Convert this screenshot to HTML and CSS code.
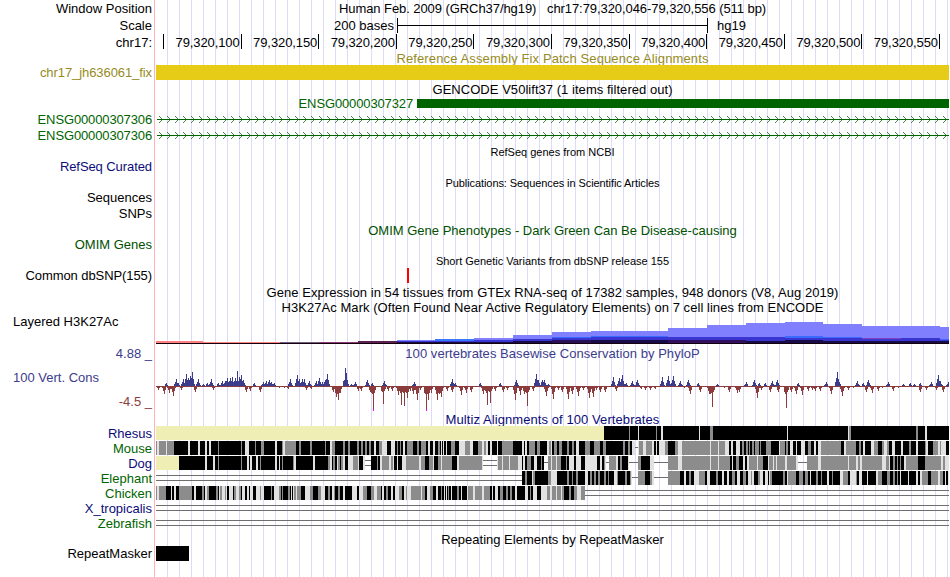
FILE: index.html
```html
<!DOCTYPE html>
<html lang="en">
<head>
  <meta charset="UTF-8">
  <title>chr17:79,320,046-79,320,556 - Genome Browser</title>
  <link rel="stylesheet" href="styles.css">
</head>
<body>
  <div class="browser">
    <div class="row h17">
      <div class="label">Window Position</div>
      <div class="title t-position">Human Feb. 2009 (GRCh37/hg19)&nbsp;&nbsp; chr17:79,320,046-79,320,556 (511 bp)</div>
    </div>
    <div class="row h17">
      <div class="label">Scale</div>
      <div class="scale">
        <span class="scale-size">200 bases</span>
        <span class="scale-bar"></span>
        <span>hg19</span>
      </div>
    </div>
    <div class="row h17">
      <div class="label">chr17:</div>
      <div class="ruler">
        <span class="first"></span>
        <span>79,320,100</span>
        <span>79,320,150</span>
        <span>79,320,200</span>
        <span>79,320,250</span>
        <span>79,320,300</span>
        <span>79,320,350</span>
        <span>79,320,400</span>
        <span>79,320,450</span>
        <span>79,320,500</span>
        <span>79,320,550</span>
      </div>
    </div>

    <div class="row h14"><div></div><div class="title gold t-fix">Reference Assembly Fix Patch Sequence Alignments</div></div>
    <div class="row h16">
      <div class="label raised gold tight">chr17_jh636061_fix</div>
      <div class="bar fix-bar"></div>
    </div>

    <div class="row h17"><div></div><div class="title t-gencode">GENCODE V50lift37 (1 items filtered out)</div></div>
    <div class="row h13">
      <div></div>
      <div class="gene">
        <span class="gene-name">ENSG00000307327</span>
        <span class="gene-exon"></span>
      </div>
    </div>
    <div class="row h16">
      <div class="label green ensg">ENSG00000307306</div>
      <svg class="intron" width="794" height="16" viewBox="155 0 794 16" shape-rendering="crispEdges">
        <defs>
          <pattern id="arrows" x="157" y="0" width="8" height="16" patternUnits="userSpaceOnUse">
            <path d="M2 5h1v1h-1zM3 6h1v1h-1zM4 7h1v1h-1zM5 8h1v1h-1zM4 9h1v1h-1zM3 10h1v1h-1zM2 11h1v1h-1z" fill="#006400" opacity=".75"/>
          </pattern>
        </defs>
        <rect x="157" y="8" width="792" height="1" fill="#006400"/>
        <rect x="157" y="0" width="792" height="16" fill="url(#arrows)"/>
      </svg>
    </div>
    <div class="row h16">
      <div class="label green ensg">ENSG00000307306</div>
      <svg class="intron" width="794" height="16" viewBox="155 0 794 16" shape-rendering="crispEdges">
        <rect x="157" y="8" width="792" height="1" fill="#006400"/>
        <rect x="157" y="0" width="792" height="16" fill="url(#arrows)"/>
      </svg>
    </div>

    <div class="row h17"><div></div><div class="title small lowered">RefSeq genes from NCBI</div></div>
    <div class="row h14"><div class="label raised navy tight">RefSeq Curated</div></div>
    <div class="row h17"><div></div><div class="title small lowered tight">Publications: Sequences in Scientific Articles</div></div>
    <div class="row h14"><div class="label raised">Sequences</div></div>
    <div class="row h16"><div class="label">SNPs</div></div>
    <div class="row h17"><div></div><div class="title omim lowered">OMIM Gene Phenotypes - Dark Green Can Be Disease-causing</div></div>
    <div class="row h14"><div class="label raised omim">OMIM Genes</div></div>
    <div class="row h16"><div></div><div class="title small lowered">Short Genetic Variants from dbSNP release 155</div></div>
    <div class="row h16">
      <div class="label raised tight">Common dbSNP(155)</div>
      <div class="variants"><span class="variant"></span></div>
    </div>
    <div class="row h16"><div></div><div class="title loose">Gene Expression in 54 tissues from GTEx RNA-seq of 17382 samples, 948 donors (V8, Aug 2019)</div></div>
    <div class="row h15"><div></div><div class="title loose">H3K27Ac Mark (Often Found Near Active Regulatory Elements) on 7 cell lines from ENCODE</div></div>
    <div class="row h31">
      <div class="label left">Layered H3K27Ac</div>
      <svg id="h3k27ac" width="794" height="31" viewBox="155 315 794 31" shape-rendering="crispEdges"></svg>
    </div>

    <div class="row h15">
      <div class="label blue">4.88 _</div>
      <div class="title blue loose">100 vertebrates Basewise Conservation by PhyloP</div>
    </div>
    <div class="row h51">
      <div class="cons-labels">
        <span class="blue cons-name">100 Vert. Cons</span>
        <span class="red cons-min">-4.5 _</span>
      </div>
      <svg id="phylop" width="794" height="51" viewBox="155 361 794 51" shape-rendering="crispEdges"></svg>
    </div>

    <div class="row h14"><div></div><div class="title navy t-multiz">Multiz Alignments of 100 Vertebrates</div></div>
    <div class="row h15"><div class="label navy">Rhesus</div><svg class="align" data-species="rhesus" width="794" height="15" viewBox="155 0 794 15" shape-rendering="crispEdges"></svg></div>
    <div class="row h15"><div class="label green">Mouse</div><svg class="align" data-species="mouse" width="794" height="15" viewBox="155 0 794 15" shape-rendering="crispEdges"></svg></div>
    <div class="row h15"><div class="label navy">Dog</div><svg class="align" data-species="dog" width="794" height="15" viewBox="155 0 794 15" shape-rendering="crispEdges"></svg></div>
    <div class="row h15"><div class="label green">Elephant</div><svg class="align" data-species="elephant" width="794" height="15" viewBox="155 0 794 15" shape-rendering="crispEdges"></svg></div>
    <div class="row h15"><div class="label green">Chicken</div><svg class="align" data-species="chicken" width="794" height="15" viewBox="155 0 794 15" shape-rendering="crispEdges"></svg></div>
    <div class="row h15"><div class="label navy">X_tropicalis</div><svg class="align" data-species="frog" width="794" height="15" viewBox="155 0 794 15" shape-rendering="crispEdges"></svg></div>
    <div class="row h15"><div class="label green">Zebrafish</div><svg class="align" data-species="zebrafish" width="794" height="15" viewBox="155 0 794 15" shape-rendering="crispEdges"></svg></div>

    <div class="row h15"><div></div><div class="title lowered">Repeating Elements by RepeatMasker</div></div>
    <div class="row h16">
      <div class="label raised">RepeatMasker</div>
      <div class="bar repeat"></div>
    </div>
  </div>
  <script src="script.js"></script>
</body>
</html>
```
FILE: styles.css
```css
body {
  margin: 0;
  background-color: #fff;
  color: #000;
  font-family: "Liberation Sans", Arial, sans-serif;
  font-size: 13px;
  line-height: 15px;
}
.browser {
  width: 949px;
  height: 577px;
  overflow: hidden;
  background-image:
    linear-gradient(#ffb4b4, #ffb4b4),
    repeating-linear-gradient(to right, #dcdcf8 0, #dcdcf8 1px, transparent 1px, transparent 12px);
  background-repeat: no-repeat;
  background-size: 1px 100%, 782px 100%;
  background-position: 154px 0, 167px 0;
}
.row {
  display: grid;
  grid-template-columns: 155px 794px;
  align-items: center;
  white-space: nowrap;
}
.row svg {
  display: block;
}
.h13 { height: 13px; }
.h14 { height: 14px; }
.h15 { height: 15px; }
.h16 { height: 16px; }
.h17 { height: 17px; }
.h31 { height: 31px; }
.h51 { height: 51px; }

.label {
  padding-right: 3px;
  text-align: right;
}
.label.left {
  align-self: start;
  padding-left: 13px;
  line-height: 13px;
  text-align: left;
}
.title {
  padding-left: 1px;
  text-align: center;
}
.small {
  font-size: 11px;
}
.raised {
  line-height: 13px;
  padding-bottom: 2px;
}
.lowered {
  line-height: 13px;
  padding-top: 2px;
}
.tight { letter-spacing: -0.08px; }
.loose { letter-spacing: 0.05px; }
.ensg { letter-spacing: -0.13px; }
.t-position { letter-spacing: -0.07px; }
.t-fix { letter-spacing: 0.12px; }
.t-gencode { letter-spacing: 0.04px; }
.t-multiz { letter-spacing: 0.08px; }

.gold { color: #968b1e; }
.green { color: #006400; }
.omim { color: #005000; }
.navy { color: #0c0c78; }
.blue { color: #3c3c8c; }
.red { color: #8c3c3c; }

/* scale and ruler */
.scale {
  display: flex;
  align-items: center;
}
.scale-size {
  width: 239px;
  margin-right: 3px;
  text-align: right;
}
.scale-bar {
  box-sizing: border-box;
  width: 311px;
  height: 15px;
  margin-right: 9px;
  border: solid #000;
  border-width: 0 1px;
  background: linear-gradient(#000, #000) 0 7px / 100% 1px no-repeat;
}
.ruler {
  display: flex;
  align-self: start;
}
.ruler span {
  box-sizing: border-box;
  flex: 0 0 77.6px;
  height: 15px;
  padding-right: 1px;
  border-right: 1px solid #000;
  letter-spacing: -0.1px;
  line-height: 17px;
  text-align: right;
}
.ruler .first {
  flex-basis: 9px;
}

/* feature bars */
.bar {
  align-self: start;
  height: 15px;
  margin-left: 1px;
}
.fix-bar {
  background-color: #e6cb17;
}
.repeat {
  width: 33px;
  background-color: #000;
}
.gene {
  display: flex;
  align-self: start;
  align-items: center;
  height: 11px;
}
.gene-name {
  width: 258px;
  margin-right: 4px;
  color: #006400;
  letter-spacing: -0.13px;
  text-align: right;
}
.gene-exon {
  flex: 1;
  height: 9px;
  background-color: #006400;
}
.variants {
  align-self: start;
  padding-left: 252px;
}
.variant {
  display: block;
  width: 2px;
  height: 15px;
  background-color: #f00;
}

/* conservation */
.cons-labels {
  display: flex;
  flex-direction: column;
  justify-content: space-between;
  box-sizing: border-box;
  height: 51px;
  padding: 9px 3px 3px 13px;
}
.cons-min {
  text-align: right;
}
```
FILE: script.js
```js
const svgNS = 'http://www.w3.org/2000/svg';

function addRect(svg, x, y, width, height, fill) {
  const rect = document.createElementNS(svgNS, 'rect');
  rect.setAttribute('x', x);
  rect.setAttribute('y', y);
  rect.setAttribute('width', width);
  rect.setAttribute('height', height);
  rect.setAttribute('fill', fill);
  svg.appendChild(rect);
}

// Alignment runs: a code and the x where the run starts.
// k/g/l = shades of identity, y = yellow, '=' double line gap, '-' single line gap
const alignments = {
  rhesus: 'y156 k604 g629 k630 l638 k639 g656 k657 l661 k663 l699 k700 g710 k713 l787 k788 l848 g849 k851 g916 k918 l925 k927',
  mouse: 'g156 l157 g159 l166 g167 k174 l188 k190 l198 k200 l205 k207 l209 k211 g218 k219 g241 k242 l245 k249 g255 k256 g261 k264 l275 k277 g282 l283 g285 k296 g299 k301 g310 k312 g325 k326 l330 g332 k335 g343 k345 g348 k350 ' +
    'g357 k359 g361 k363 g365 k367 g369 k371 l374 k376 g379 l382 k387 l391 k395 g397 k398 g400 k401 l403 k405 g407 k413 g417 k419 g421 k426 l428 k430 l433 k435 g438 k440 l441 k442 l443 k444 l446 k447 g451 k455 l459 g465 l470 k473 g478 l482 g484 l486 k488 l490 k492 l497 k498 g502 k513 l522 k524 l525 k527 g529 k535 g537 k540 l547 g549 l551 ' +
    'k552 g554 k557 g559 k562 g567 k569 g572 k574 l576 k579 g585 k590 g594 k600 g603 k606 g623 k625 g628 k630 l632 -635 l638 g639 l643 g646 l652 k654 l656 k657 l659 g665 k668 g675 l678 g682 l710 g711 l718 g719 l725 k729 l731 k733 l736 k740 g742 k744 g746 k748 g749 ' +
    'k750 g752 k754 g755 k759 g760 k761 g766 k771 l779 g780 k785 g786 k788 l790 k793 l796 k797 l801 k805 g808 k811 l814 k816 l818 g821 k841 l844 g846 k856 g859 k861 l863 k865 l871 g874 k878 g882 l884 g887 k889 l892 k895 l901 k903 g909 k911 l916 k918 g925 l926 k928 g933 l938 g940 l941 k946',
  dog: 'y156 k179 l205 k207 l213 k215 g218 k219 g241 k242 l247 k249 l250 k252 l256 k258 g260 k261 l275 k277 l279 k280 g282 k283 g293 l294 k296 l313 k315 g328 l330 k332 g333 k335 l337 g338 k340 g341 l343 k345 l348 g353 l358 ' +
    'g359 k359 l363 =365 k371 g377 k378 l380 g382 l389 g391 l393 k394 l397 k398 l402 g406 l419 g421 k425 g429 l433 k434 g438 l441 g442 k452 l457 g459 l482 =483 l497 g498 l502 g503 l509 g510 l518 k522 l523 k525 g527 k531 l534 k537 g541 k542 -544 g548 l551 g552 ' +
    'l556 g557 k561 g566 k567 l569 k574 l576 k581 l585 k597 l600 k602 g604 l605 -606 g609 l616 k618 g620 k622 l628 -629 g638 k641 l650 -654 g668 l678 g682 l710 g711 l718 g719 k730 l732 k733 g736 k739 l743 k745 l747 g749 ' +
    'l757 g758 k763 l768 g769 l773 g774 l776 g777 l785 g787 l796 -798 g807 l818 g821 l848 g849 l856 g858 l860 g862 l882 g886 l889 k890 g893 k895 g897 k898 g900 k901 l904 g906 k918 g925 l941 g943 l945',
  elephant: '=156 k522 g525 k527 l532 g533 k535 g548 l551 ' +
    'k557 g567 k569 g572 k573 g576 k578 l585 k588 g590 k592 g594 k596 g598 k600 g604 k606 g608 k609 l614 g617 k618 g625 k627 g630 l631 -632 g638 k645 g650 l652 -654 g668 k680 l684 k686 g689 k691 l694 g699 k705 l707 k710 g716 k718 l722 k724 l727 k729 g732 k735 l737 k740 g743 k746 l748 ' +
    'g751 l752 k754 g758 l760 k763 l765 k768 l769 g770 k772 g783 k785 l787 g788 k796 g799 k803 g805 k808 l810 k811 g816 k818 g821 k822 l827 k829 g832 k833 l840 g843 k848 l850 g856 k857 l859 k862 l867 k868 l876 g878 k882 g887 k890 g893 k895 g897 k898 l900 k901 l908 k909 l916 k918 l920 g922 k928 g931 l938 g940 k943 l945 k946 l948',
  chicken: 'g156 l157 g159 k166 l171 k172 l174 k176 g179 k192 l194 k196 g202 k204 l205 g207 k209 g216 k218 l219 g220 l222 g225 l226 k227 l229 k233 g234 l236 g239 k241 l242 k245 l247 k249 l250 k253 l256 g260 l261 k264 g271 k272 l274 g279 k281 g282 k283 g288 k290 l291 k292 l293 g294 l296 g297 k301 l305 g310 k313 g318 l321 k325 g328 k330 l332 g334 k335 g338 k340 l343 k345 l352 k357 ' +
    'l359 g363 k367 g371 l374 g377 k381 l382 k384 g386 k388 l391 k393 l395 g399 k402 l404 g406 l407 g411 l421 g422 k425 l427 g430 k433 l436 k438 g441 k442 l444 k445 l446 k447 g448 k449 l451 k452 g457 k459 l461 k462 l467 g468 l473 g475 l482 g484 k490 l492 k493 l495 k498 g500 k503 g506 k508 g510 k512 l515 k517 l525 k528 g530 k531 l533 k537 l541 g547 l550 ' +
    'g552 l556 g557 l561 g562 k564 g569 k571 g574 l577 g581 =585',
  frog: '=156',
  zebrafish: '=156'
};
const shades = { k: '#000', g: '#8c8c8c', l: '#e1e1e1', y: '#efeeb4' };

document.querySelectorAll('.align').forEach(svg => {
  const runs = alignments[svg.dataset.species].split(' ')
    .map(run => ({ code: run[0], x: Number(run.slice(1)) }));
  runs.forEach((run, i) => {
    const end = i + 1 < runs.length ? runs[i + 1].x : 949;
    const width = end - run.x;
    if (run.code === '=') {
      addRect(svg, run.x, 4, width, 1, '#6e6e6e');
      addRect(svg, run.x, 9, width, 1, '#6e6e6e');
    } else if (run.code === '-') {
      addRect(svg, run.x, 6, width, 1, '#6e6e6e');
    } else {
      addRect(svg, run.x, 0, width, 14, shades[run.code]);
    }
  });
});

// Layered H3K27Ac signal: x where the step starts, top and color
const marks = [
  [156, 341, '#ff8080'], [203, 342, '#ff8080'], [280, 342, '#706080'], [319, 342, '#903878'], [358, 341, '#5c2050'],
  [397, 340, '#8080ff'], [435, 339, '#3a78ff'], [474, 338, '#8080ff'], [513, 335, '#8080ff'], [552, 332, '#8080ff'],
  [591, 331, '#8080ff'], [668, 328, '#8080ff'], [707, 325, '#8080ff'], [746, 323, '#8080ff'], [785, 322, '#8080ff'],
  [823, 324, '#8080ff'], [862, 326, '#8080ff'], [940, 327, '#8080ff']
];
const markLayers = [
  [397, 341, '#3a34d0'], [435, 341, '#3a34d0'], [474, 340, '#3a34d0'], [513, 339, '#3a34d0'], [552, 338, '#3a34d0'],
  [591, 337, '#3a34d0'], [668, 337, '#3a34d0'], [785, 338, '#3a34d0'], [823, 338, '#3a34d0'], [862, 339, '#3a34d0'], [940, 340, '#3a34d0']
];
const markShadows = [
  [397, 342, '#180c48'], [474, 342, '#180c48'], [513, 341, '#180c48'], [552, 340, '#281058'], [591, 340, '#180c48'],
  [668, 340, '#30105c'], [746, 341, '#180c48'], [785, 340, '#180c48'], [823, 341, '#180c48']
];
const markLines = [
  [591, 336, 77, 1, '#3a6bff'], [552, 337, 39, 1, '#3a6bff'], [785, 336, 38, 2, '#3a6bff'],
  [823, 337, 39, 1, '#3a6bff'], [862, 338, 39, 1, '#8040c0'], [901, 338, 39, 1, '#3a34d0'], [940, 339, 9, 1, '#3a6bff']
];
const h3k27ac = document.getElementById('h3k27ac');
[marks, markLayers, markShadows].forEach(layer => {
  layer.forEach(([x, top, color], i) => {
    const end = i + 1 < layer.length ? layer[i + 1][0] : 949;
    addRect(h3k27ac, x, top, end - x, 343 - top, color);
  });
});
markLines.forEach(line => addRect(h3k27ac, ...line));
addRect(h3k27ac, 156, 343, 793, 1, '#14000c');

// PhyloP scores: x and height of each peak, negative below the axis
const peaks = [
  [158, -4], [164, -8], [166, 3], [169, -7], [173, -10], [176, 7], [178, 3], [181, -4], [183, 7], [186, 12], [188, 8], [190, 10], [192, 14],
  [195, -6], [198, 7], [203, 2], [207, 3], [211, 7], [213, -4], [218, 3], [222, 5], [225, 5], [227, 8], [230, 8], [232, 9], [235, 8], [237, 15],
  [239, 9], [241, 11], [243, 6], [246, -6], [250, -5], [254, 3], [260, -6], [263, 4], [266, 5], [269, 6], [271, 4], [274, 3], [279, -2],
  [284, -2], [288, -3], [290, 7], [297, 11], [299, 7], [302, 7], [304, 7], [306, -4], [309, 5], [311, -3], [316, 5], [319, 8], [322, 4],
  [325, 6], [327, 12], [333, -6], [336, -11], [338, -14], [340, -7], [345, 18], [346, 13], [351, 2], [355, 4], [358, -5], [361, -5], [367, 6],
  [370, -6], [372, 3], [373, -24], [383, -18], [384, 5], [388, -5], [392, -5], [398, -9], [401, -19], [404, -20], [407, -12], [410, -5],
  [413, -8], [414, 4], [417, -14], [420, -4], [426, -24], [428, -14], [431, -7], [437, -14], [439, -8], [441, -11], [447, -5], [452, 7],
  [452, -6], [455, 3], [461, -9], [466, -7], [471, -6], [480, 3], [483, -8], [487, -19], [490, -17], [495, -5], [500, 3], [503, -6],
  [507, -4], [515, -14], [516, 6], [520, -9], [524, -8], [527, -20], [533, -5], [536, 12], [538, 6], [542, 6], [544, 6], [546, -10], [548, 2],
  [553, -13], [558, -4], [562, -6], [568, -13], [572, -8], [578, -10], [583, -4], [589, -12], [593, -11], [596, -4], [600, -6], [605, -6],
  [613, 9], [616, -5], [619, 8], [622, 11], [626, 3], [632, 5], [637, 6], [641, -3], [645, -4], [650, -4], [655, -3], [662, 9], [668, 10],
  [673, 10], [680, 5], [684, -2], [688, 6], [690, -8], [698, 3], [700, -6], [709, -8], [710, -8], [712, -21], [717, 2], [724, -2], [729, -6],
  [737, -7], [739, -6], [746, 4], [754, 6], [757, -12], [759, 3], [761, -4], [765, 3], [770, -6], [772, 5], [777, 6], [778, -6], [786, -22],
  [791, -6], [796, -8], [798, 3], [802, -9], [808, -5], [812, -4], [815, -5], [820, -5], [826, 4], [831, -8], [837, 14], [839, 4], [842, -10],
  [848, -4], [853, -2], [857, 5], [863, 3], [866, -6], [868, 6], [872, -7], [878, -5], [882, -2], [888, 4], [893, -5], [898, -2], [903, 2],
  [910, 3], [914, 2], [920, 3], [920, -6], [926, -4], [931, 4], [936, -4], [938, 11], [940, 5], [943, -6], [948, 4]
];
const phylop = document.getElementById('phylop');
function addScore(x, score) {
  if (score > 0) addRect(phylop, x, 386 - score, 1, score, '#3c3c8c');
  else if (score < 0) addRect(phylop, x, 386, 1, -score, '#8c3c3c');
}
addRect(phylop, 156, 386, 793, 1, '#8c3c3c');
peaks.forEach(([x, score]) => {
  // tall spikes are narrow, the rest spread over neighbouring bases
  const spread = Math.abs(score) > 14 ? 0.35 : 0.6;
  addScore(x, score);
  addScore(x - 1, Math.round(score * spread));
  addScore(x + 1, Math.round(score * spread * 0.8));
  addScore(x - 2, Math.trunc(score * 0.3));
  addScore(x + 2, Math.trunc(score * 0.2));
});
// scores cut off at the bottom of the range
[373, 426].forEach(x => addRect(phylop, x, 409, 1, 2, '#ff00ff'));
```
